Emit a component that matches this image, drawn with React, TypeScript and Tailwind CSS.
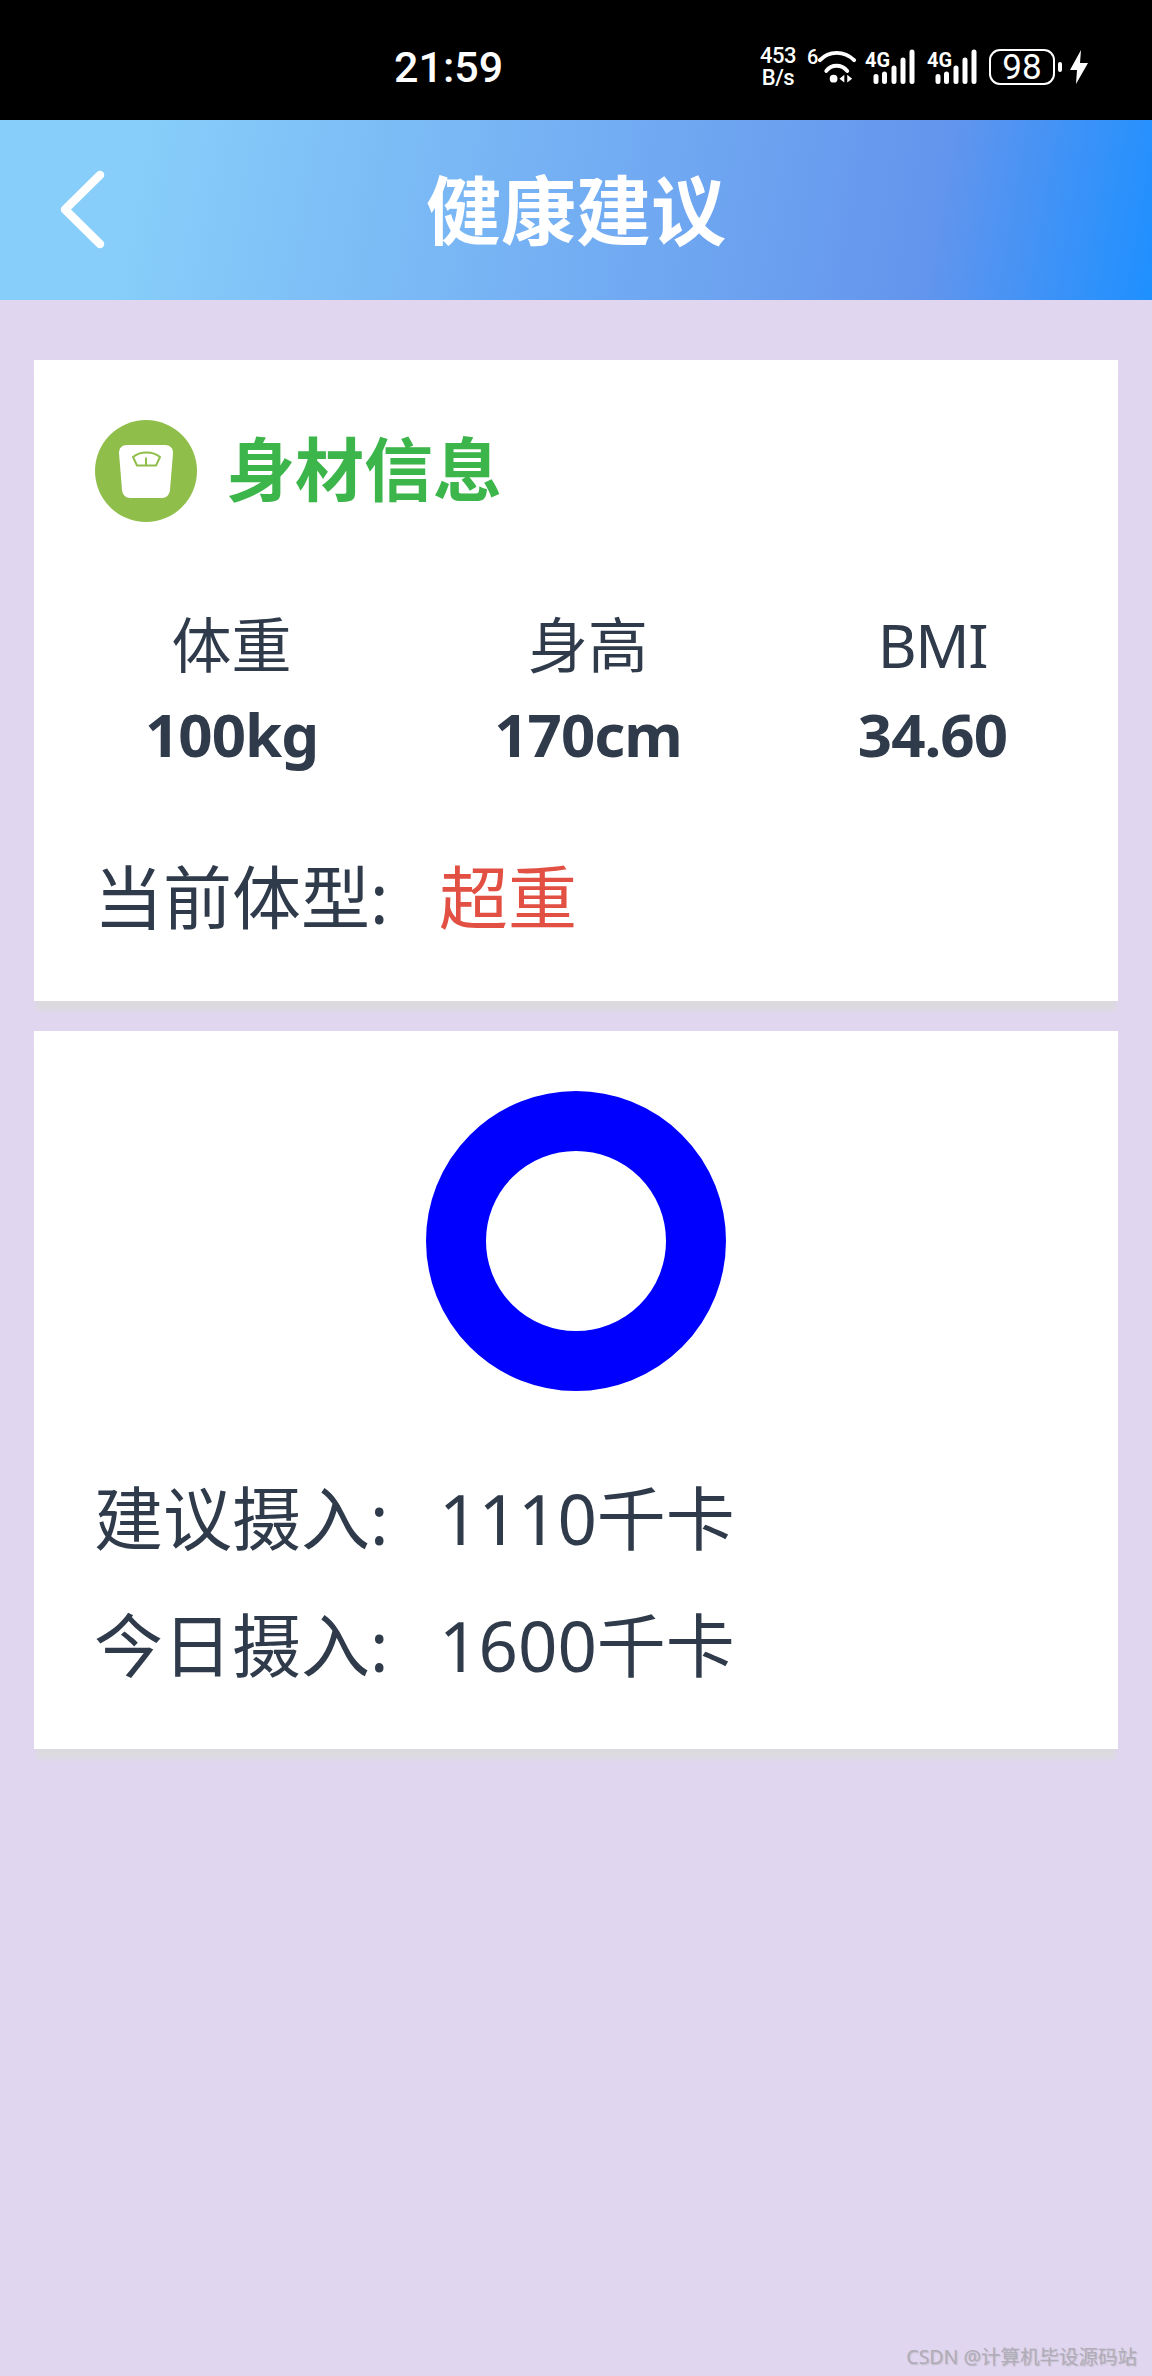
const FONT = "font-['Noto_Sans','Noto_Sans_CJK_SC',sans-serif]";

function Signal({ className = "" }: { className?: string }) {
  return (
    <svg viewBox="0 0 50 36" className={`h-[36px] w-[50px] overflow-visible ${className}`}>
      <g fill="none" stroke="#fff" strokeWidth="5" strokeLinecap="round">
        <path d="M11 27.500V32.500M19.500 25V32.500M29 19V32.500M38 11V32.500M47 3V32.500" />
      </g>
      <text x="0" y="18" fill="#fff" fontSize="21" fontWeight="700" fontFamily="'Roboto',sans-serif" textLength="25" lengthAdjust="spacingAndGlyphs">4G</text>
    </svg>
  );
}

function StatusBar() {
  return (
    <div className="flex h-[120px] items-center bg-black pl-[394px] pr-[64px] pt-[14px] text-white">
      <span className="text-[43px] font-medium leading-none font-['Roboto',sans-serif]">21:59</span>
      <div className="ml-auto flex items-center">
        <div className="flex w-[36px] flex-col items-center text-[22px] font-medium leading-[22px] tracking-[-0.5px] font-['Roboto',sans-serif]">
          <span>453</span>
          <span>B/s</span>
        </div>
        <span className="ml-[11px] w-[11px] self-start text-[20px] font-medium leading-[24px] font-['Roboto',sans-serif]">6</span>
        <svg viewBox="0 0 40 36" className="h-[36px] w-[39px]">
          <g fill="none" stroke="#fff" strokeWidth="4" strokeLinecap="round">
            <path d="M2 11C11 1 27 1 37 11" />
            <path d="M8.500 22C14 15 24 15 30 22" />
          </g>
          <circle cx="16" cy="30" r="4" fill="#fff" />
          <path d="M27 26v8l-5-4zM30 26v8l5-4z" fill="#fff" />
        </svg>
        <Signal className="ml-[8px]" />
        <Signal className="ml-[12px]" />
        <div className="ml-[12px] flex h-[36px] w-[66px] items-center justify-center rounded-[11px] border-2 border-white text-[35px] font-normal leading-none font-['Roboto',sans-serif]">
          98
        </div>
        <div className="ml-[3px] h-[10px] w-[4px] rounded-full bg-white" />
        <svg viewBox="0 0 18 34" className="ml-[8px] h-[34px] w-[18px]">
          <path d="M11 0L0 20H7L6 34L18 13H10Z" fill="#fff" />
        </svg>
      </div>
    </div>
  );
}

function Header() {
  return (
    <div className="relative flex h-[180px] items-center justify-center bg-[linear-gradient(100deg,#87cefa_12%,#6495ed_80%,#1e90ff_100%)]">
      <svg viewBox="0 0 50 84" className="absolute left-[57px] top-[50px] h-[84px] w-[50px]">
        <path d="M43 5L8 39.500L43 74" fill="none" stroke="#fff" strokeWidth="8.500" strokeLinecap="round" strokeLinejoin="round" />
      </svg>
      <h1 className="text-[75px] font-bold leading-none text-white">健康建议</h1>
    </div>
  );
}

function ScaleIcon() {
  return (
    <svg viewBox="0 0 102 102" className="h-[102px] w-[102px] shrink-0">
      <circle cx="51" cy="51" r="51" fill="#8fbe4a" />
      <path d="M32 25H70C75 25 78 28 78 33L75 70C74.500 75 71 78 67 78H35C31 78 27.500 75 27 70L24 33C24 28 27 25 32 25Z" fill="#fff" />
      <path d="M38 37C45 31 58 31 65 37L61 45.500H42Z" fill="none" stroke="#8fbe4a" strokeWidth="2" strokeLinejoin="round" />
      <path d="M51 37.500V45" stroke="#8fbe4a" strokeWidth="2" />
    </svg>
  );
}

function Stat({ label, value, labelClass = "" }: { label: string; value: string; labelClass?: string }) {
  return (
    <div className="flex flex-col items-center">
      <span className={`text-[60px] leading-[89px] whitespace-nowrap ${labelClass}`}>{label}</span>
      <span className="text-[60px] font-bold leading-[89px] tracking-[-1px] whitespace-nowrap">{value}</span>
    </div>
  );
}

function Row({ label, children }: { label: string; children: React.ReactNode }) {
  return (
    <div className="flex text-[69px] leading-[127px] whitespace-nowrap">
      <span className="w-[345px]">{label}:</span>
      <span>{children}</span>
    </div>
  );
}

export default function App() {
  return (
    <div className={`relative flex h-[2376px] w-[1152px] flex-col overflow-hidden bg-[#e0d6f0] text-[#2f3a4a] ${FONT}`}>
      <StatusBar />
      <Header />
      <main className="flex flex-col gap-[30px] px-[34px] pt-[60px]">
        <section className="bg-white pb-[40px] pl-[60px] pr-[60px] pt-[60px] shadow-[0_12px_4px_-2px_#dcdadf]">
          <div className="ml-px flex items-center gap-[29px]">
            <ScaleIcon />
            <h2 className="-mt-[3px] text-[69px] font-bold leading-none text-[#3cb54a]">身材信息</h2>
          </div>
          <div className="mt-[79px] flex justify-between px-[51px]">
            <Stat label="体重" value="100kg" />
            <Stat label="身高" value="170cm" />
            <Stat label="BMI" value="34.60" labelClass="tracking-[-1.5px]" />
          </div>
          <div className="mt-[55px]">
            <Row label="当前体型">
              <span className="text-[#e25044]">超重</span>
            </Row>
          </div>
        </section>
        <section className="bg-white px-[60px] pb-[40px] pt-[60px] shadow-[0_12px_4px_-2px_#dcdadf]">
          <div className="mx-auto h-[300px] w-[300px] rounded-full border-[60px] border-[#0000ff]" />
          <div className="mt-[64px]">
            <Row label="建议摄入">1110千卡</Row>
            <Row label="今日摄入">1600千卡</Row>
          </div>
        </section>
      </main>
      <div className="absolute bottom-[6px] right-[15px] text-[19.5px] font-normal leading-[26px] text-[#b0acb8] [text-shadow:1px_1px_1px_#c0bcc8]">
        CSDN @计算机毕设源码站
      </div>
    </div>
  );
}
